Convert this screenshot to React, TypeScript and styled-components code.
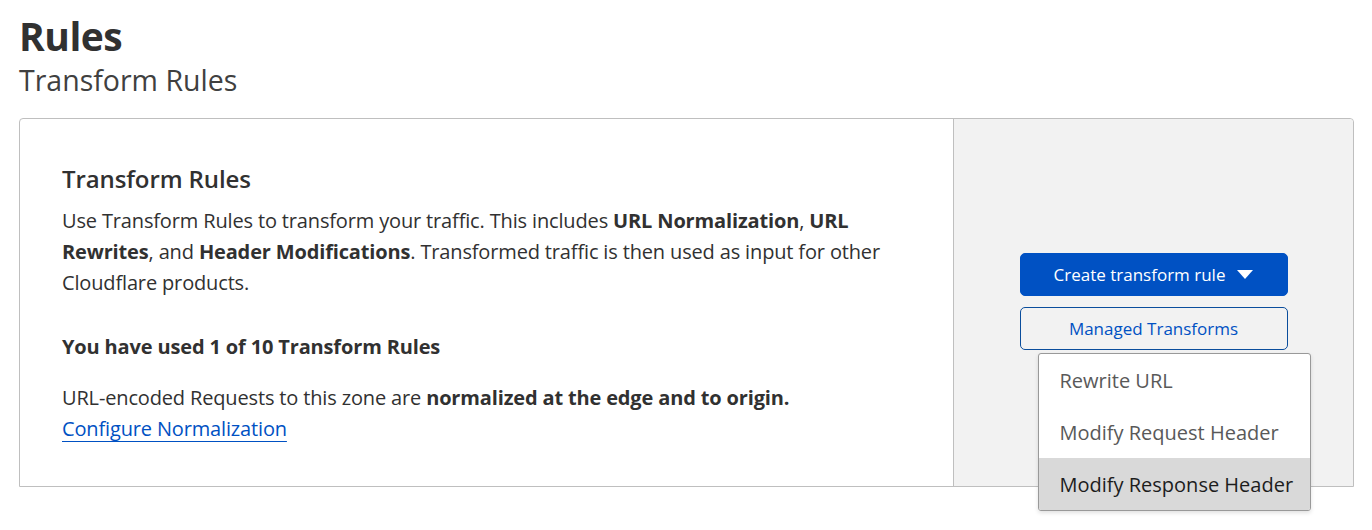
import React from "react";
import styled, { createGlobalStyle } from "styled-components";

const GlobalStyle = createGlobalStyle`
  html, body {
    margin: 0;
    padding: 0;
    background: #ffffff;
  }
  body {
    font-family: "Open Sans", "Noto Sans", "Liberation Sans", sans-serif;
    color: #313131;
  }
  * { box-sizing: border-box; }
`;

const Page = styled.div`
  min-height: 530px;
  padding: 10px 18px 0 19px;
`;

const Title = styled.h1`
  margin: 0;
  font-size: 39px;
  font-weight: 700;
  line-height: 52px;
  color: #313131;
  letter-spacing: -0.5px;
`;

const Subtitle = styled.h2`
  margin: 0;
  font-size: 28.5px;
  font-weight: 400;
  line-height: 36px;
  color: #404040;
  letter-spacing: 0;
`;

const Card = styled.section`
  margin-top: 20px;
  display: grid;
  grid-template-columns: 1fr 400px;
  height: 369px;
  border: 1px solid #bfbfbf;
  border-radius: 4px 4px 0 0;
`;

const Content = styled.div`
  padding: 44px 0 0 42px;
  max-width: 872px;
`;

const CardTitle = styled.h3`
  margin: 0 0 10px;
  font-size: 24px;
  font-weight: 600;
  line-height: 32px;
  color: #313131;
  letter-spacing: -0.1px;
`;

const Paragraph = styled.p<{ $gap?: number }>`
  margin: 0 0 ${(p) => p.$gap ?? 0}px;
  font-size: 20px;
  line-height: 31px;
  color: #313131;
  letter-spacing: -0.15px;
  b { font-weight: 700; }
`;

const Link = styled.a`
  color: #0051c3;
  text-decoration: underline;
  text-underline-offset: 5px;
  text-decoration-thickness: 1px;
`;

const Side = styled.div`
  background: #f2f2f2;
  border-left: 1px solid #bfbfbf;
  display: flex;
  align-items: center;
  justify-content: center;
  border-top-right-radius: 4px;
`;

const ButtonGroup = styled.div`
  position: relative;
  width: 268px;
  display: flex;
  flex-direction: column;
  gap: 11px;
  margin-top: -2px;
`;

const Button = styled.button<{ $primary?: boolean }>`
  height: 43px;
  width: 100%;
  border-radius: 5px;
  font-family: inherit;
  font-size: 17px;
  letter-spacing: 0;
  display: flex;
  align-items: center;
  justify-content: center;
  gap: 12px;
  cursor: pointer;
  border: 1px solid ${(p) => (p.$primary ? "#0051c3" : "#0a4d9c")};
  background: ${(p) => (p.$primary ? "#0051c3" : "transparent")};
  color: ${(p) => (p.$primary ? "#ffffff" : "#0051c3")};
  padding: 0;
`;

const Caret = styled.svg`
  width: 16px;
  height: 10px;
  margin-top: 1px;
`;

const Menu = styled.ul`
  position: absolute;
  top: calc(100% + 3px);
  left: 18px;
  width: 273px;
  margin: 0;
  padding: 0;
  list-style: none;
  background: #ffffff;
  border: 1px solid #999999;
  border-radius: 3px;
  overflow: hidden;
  box-shadow: 0 2px 4px rgba(0, 0, 0, 0.12);
  z-index: 2;
`;

const MenuItem = styled.li<{ $active?: boolean }>`
  height: 52px;
  display: flex;
  align-items: center;
  padding: 0 0 0 21px;
  font-size: 20px;
  letter-spacing: 0;
  white-space: nowrap;
  color: ${(p) => (p.$active ? "#1d1d1d" : "#595959")};
  background: ${(p) => (p.$active ? "#d9d9d9" : "transparent")};
`;

export default function App() {
  return (
    <>
      <GlobalStyle />
      <Page>
        <Title>Rules</Title>
        <Subtitle>Transform Rules</Subtitle>
        <Card>
          <Content>
            <CardTitle>Transform Rules</CardTitle>
            <Paragraph $gap={33}>
              Use Transform Rules to transform your traffic. This includes{" "}
              <b>URL Normalization</b>, <b>URL Rewrites</b>, and{" "}
              <b>Header Modifications</b>. Transformed traffic is then used as
              input for other Cloudflare products.
            </Paragraph>
            <Paragraph $gap={20}>
              <b>You have used 1 of 10 Transform Rules</b>
            </Paragraph>
            <Paragraph>
              URL-encoded Requests to this zone are{" "}
              <b>normalized at the edge and to origin.</b>
              <br />
              <Link href="#">Configure Normalization</Link>
            </Paragraph>
          </Content>
          <Side>
            <ButtonGroup>
              <Button $primary>
                Create transform rule
                <Caret viewBox="0 0 16 10">
                  <path d="M0 0 L16 0 L8 9 Z" fill="#ffffff" />
                </Caret>
              </Button>
              <Button>Managed Transforms</Button>
              <Menu>
                <MenuItem>Rewrite URL</MenuItem>
                <MenuItem>Modify Request Header</MenuItem>
                <MenuItem $active>Modify Response Header</MenuItem>
              </Menu>
            </ButtonGroup>
          </Side>
        </Card>
      </Page>
    </>
  );
}
